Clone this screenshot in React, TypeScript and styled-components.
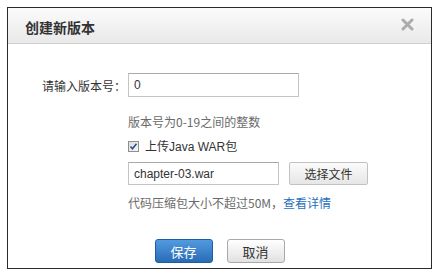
import * as React from 'react';
import styled, { createGlobalStyle } from 'styled-components';

const GlobalStyle = createGlobalStyle`
  html, body {
    margin: 0;
    padding: 0;
    background: #ffffff;
  }
  body {
    font-family: "Liberation Sans", "Noto Sans CJK SC", sans-serif;
    font-size: 12px;
    color: #333;
  }
`;

const Page = styled.div`
  padding: 7px;
`;

const Dialog = styled.div`
  width: 425px;
  height: 262px;
  box-sizing: border-box;
  border: 1px solid #2b2b2b;
  background: #fff;
  display: flex;
  flex-direction: column;
`;

const Header = styled.div`
  height: 35px;
  border-bottom: 1px solid #cfcfcf;
  background: linear-gradient(to bottom, #fbfbfb, #e9e9e9);
  display: flex;
  align-items: center;
  justify-content: space-between;
  padding: 0 17px 0 17px;
`;

const Title = styled.h3`
  margin: 0;
  font-family: "Noto Sans CJK SC", sans-serif;
  font-size: 14px;
  font-weight: 700;
  color: #333;
  line-height: 1;
  margin-top: 2px;
`;

const Close = styled.button`
  border: 0;
  background: none;
  padding: 0;
  width: 13px;
  height: 13px;
  display: flex;
  margin-top: -3px;
  cursor: pointer;
`;

const Body = styled.div`
  padding: 29px 0 0 0;
  display: flex;
  flex-direction: column;
`;

const Row = styled.div<{ $top?: number }>`
  display: flex;
  align-items: center;
  margin-top: ${p => p.$top ?? 0}px;
`;

const Label = styled.label`
  width: 118px;
  text-align: right;
  margin-right: 2px;
  font-family: "Noto Sans CJK SC", sans-serif;
  font-size: 12px;
  color: #333;
`;

const Field = styled.div`
  margin-left: 120px;
  display: flex;
  align-items: center;
  gap: 10px;
`;

const TextInput = styled.input<{ $width: number; $height: number }>`
  width: ${p => p.$width}px;
  height: ${p => p.$height}px;
  box-sizing: border-box;
  border: 1px solid #c4c4c4;
  border-top-color: #a8a8a8;
  padding: 0 5px;
  font-family: "Liberation Sans", sans-serif;
  font-size: 12px;
  color: #333;
  outline: none;
`;

const Hint = styled.div`
  margin-left: 120px;
  line-height: 18px;
  font-family: "Noto Sans CJK SC", sans-serif;
  font-size: 12px;
  color: #6a6a6a;
`;

const Link = styled.a`
  color: #1f6fc0;
  text-decoration: none;
`;

const CheckLabel = styled.label`
  margin-left: 120px;
  display: flex;
  align-items: center;
  gap: 6px;
  line-height: 18px;
  font-size: 12px;
  color: #333;
`;

const CheckBox = styled.span`
  width: 11px;
  height: 11px;
  box-sizing: border-box;
  border: 1px solid #8f8f8f;
  background: linear-gradient(to bottom right, #dcdcdc, #f7f7f7);
  display: flex;
  align-items: center;
  justify-content: center;
`;

const GrayButton = styled.button`
  width: 79px;
  height: 23px;
  box-sizing: border-box;
  border: 1px solid #c2c2c2;
  border-radius: 2px;
  background: linear-gradient(to bottom, #fbfbfb, #e6e6e6);
  font-family: "Noto Sans CJK SC", sans-serif;
  font-size: 12px;
  color: #333;
  padding: 0;
`;

const Actions = styled.div`
  margin-top: 27px;
  display: flex;
  justify-content: center;
  gap: 14px;
`;

const ActionButton = styled.button<{ $primary?: boolean }>`
  width: 58px;
  height: 24px;
  box-sizing: border-box;
  border-radius: 3px;
  padding: 0;
  font-family: "Noto Sans CJK SC", sans-serif;
  font-size: 13px;
  border: 1px solid ${p => (p.$primary ? '#1f5da3' : '#a9a9a9')};
  color: ${p => (p.$primary ? '#fff' : '#333')};
  background: ${p =>
    p.$primary
      ? 'linear-gradient(to bottom, #529be0, #2a6bb6)'
      : 'linear-gradient(to bottom, #ffffff, #e1e1e1)'};
`;

const Zh = styled.span`
  font-family: "Noto Sans CJK SC", sans-serif;
`;

export default function App() {
  return (
    <Page>
      <GlobalStyle />
      <Dialog>
        <Header>
          <Title>创建新版本</Title>
          <Close aria-label="关闭">
            <svg width="13" height="13" viewBox="0 0 13 13">
              <path d="M2 2 L11 11 M11 2 L2 11" stroke="#ababab" strokeWidth="3" strokeLinecap="round" />
            </svg>
          </Close>
        </Header>
        <Body>
          <Row>
            <Label>请输入版本号：</Label>
            <TextInput $width={171} $height={24} defaultValue="0" />
          </Row>
          <Hint style={{ marginTop: 16 }}>版本号为0-19之间的整数</Hint>
          <CheckLabel style={{ marginTop: 6 }}>
            <CheckBox>
              <svg width="9" height="9" viewBox="0 0 9 9">
                <path d="M1.5 4.5 L3.5 6.8 L7.5 1.8" stroke="#2b4f8f" strokeWidth="1.6" fill="none" />
              </svg>
            </CheckBox>
            <span>
              <Zh>上传</Zh>Java WAR<Zh>包</Zh>
            </span>
          </CheckLabel>
          <Row $top={6}>
            <Field>
              <TextInput $width={151} $height={23} defaultValue="chapter-03.war" />
              <GrayButton>选择文件</GrayButton>
            </Field>
          </Row>
          <Hint style={{ marginTop: 9 }}>
            代码压缩包大小不超过50M，<Link href="#">查看详情</Link>
          </Hint>
          <Actions>
            <ActionButton $primary>保存</ActionButton>
            <ActionButton>取消</ActionButton>
          </Actions>
        </Body>
      </Dialog>
    </Page>
  );
}
